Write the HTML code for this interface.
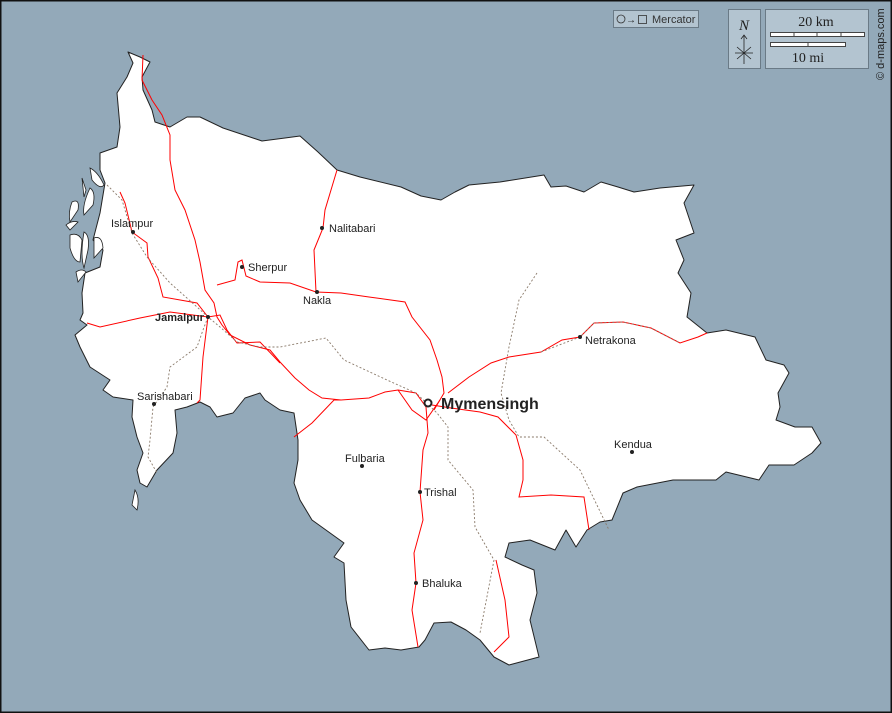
<!DOCTYPE html>
<html><head><style>
html,body{margin:0;padding:0;width:892px;height:713px;overflow:hidden;background:#93a9b9}
svg{display:block}
.s{font-family:"Liberation Sans",sans-serif;fill:#222}
.f{font-family:"Liberation Serif",serif;fill:#222}
</style></head><body>
<svg width="892" height="713" viewBox="0 0 892 713" xmlns="http://www.w3.org/2000/svg">
<rect x="0" y="0" width="892" height="713" fill="#93a9b9"/>
<path fill="#fff" stroke="#222" stroke-width="1" stroke-linejoin="round" d="M128,52 L140,57 150,62 142,77 143,90 152,110 155,122 170,127 187,117 200,117 223,128 253,138 262,141 285,138 300,136 318,152 337,170 360,177 401,187 421,196 441,200 455,192 469,185 500,182 544,175 551,187 566,186 584,192 601,182 618,187 634,192 660,188 694,185 684,203 694,233 676,240 684,260 678,273 691,293 687,317 707,333 726,330 755,337 766,360 784,365 789,373 778,393 780,407 776,420 795,427 812,427 821,443 812,453 794,465 769,465 759,480 726,472 716,480 673,480 637,487 623,493 612,520 600,522 587,530 576,547 566,530 555,550 530,540 509,543 505,557 522,565 534,570 537,593 530,620 539,657 509,665 494,657 480,640 466,630 451,622 434,623 425,640 419,647 401,650 385,648 369,650 351,627 346,600 344,563 334,557 344,543 312,520 300,500 294,483 298,460 298,440 294,413 280,410 265,400 260,393 245,398 233,413 217,417 210,407 200,402 187,407 175,410 177,433 173,453 157,470 147,487 140,483 137,470 143,453 137,437 132,417 133,400 113,397 103,390 110,380 90,367 80,347 75,335 87,325 80,320 83,313 82,293 85,273 100,267 103,250 93,240 100,213 105,183 100,170 100,153 117,147 120,127 117,93 127,77 133,63 Z"/>
<g fill="#fff" stroke="#222" stroke-width="0.8">
<path d="M90,168 Q98,172 104,185 Q100,190 92,180 Z"/>
<path d="M82,178 L86,190 84,197 Z"/>
<path d="M90,188 Q96,192 93,205 L84,215 Q82,205 90,188 Z"/>
<path d="M72,202 Q80,198 78,210 L70,222 Q68,212 72,202 Z"/>
<path d="M66,225 Q72,220 78,222 L70,230 Z"/>
<path d="M70,235 Q78,232 82,240 L80,262 Q74,262 70,248 Z"/>
<path d="M84,232 Q90,235 88,250 L84,268 Q80,255 84,232 Z"/>
<path d="M94,238 Q102,235 103,248 L94,258 Z"/>
<path d="M76,272 Q82,268 86,272 L78,282 Z"/>
<path d="M135,490 Q140,498 137,510 L132,505 Z"/>
</g>
<g fill="none" stroke="#f00" stroke-width="1">
<polyline points="143,55 142,80 152,100 162,115 170,135 170,160 175,190 185,210 195,240 200,262 205,290 214,303 217,317 222,325 230,335 250,345 270,350 280,362 295,378 309,390 322,398 341,400 369,398 385,392 398,390 416,393 426,407"/>
<polyline points="87,323 100,327 140,318 170,312 208,317 220,315 227,330 237,343 260,342 280,363"/>
<polyline points="120,192 125,203 132,232 147,243 148,257 158,278 163,297 197,303 208,317"/>
<polyline points="208,317 203,357 200,400 197,403"/>
<polyline points="217,285 235,280 238,262 242,260 246,276 260,282 290,283 316,292 341,293 369,297 405,302 412,317 430,340 437,360 442,377 444,393 434,410"/>
<polyline points="337,170 325,210 323,228 314,250 316,292"/>
<polyline points="448,393 469,377 491,363 509,357 541,352 562,340 580,337 594,323 623,322 651,328 680,343 698,337 707,333"/>
<polyline points="426,407 428,433 423,450 420,492 423,520 414,553 416,583 412,610 418,647"/>
<polyline points="432,405 451,408 480,412 498,417 516,435 523,460 523,480 519,497 551,495 584,497 589,530"/>
<polyline points="496,560 505,600 509,637 494,652"/>
<polyline points="398,390 412,410 426,420 440,400"/>
<polyline points="294,437 312,423 334,400 341,400"/>
</g>
<g fill="none" stroke="#8a7a6a" stroke-width="0.9" stroke-dasharray="2,2">
<polyline points="107,185 122,200 132,233 147,257 170,283 197,307 208,317 220,327 237,342 260,347 280,347 326,338 344,360 387,380 416,393 437,413 448,427 448,460 473,490 475,527 494,560 480,633"/>
<polyline points="208,317 203,330 197,347 170,367 167,387 153,407 150,440 148,457 157,473"/>
<polyline points="537,273 519,300 509,347 501,393 509,420 519,437 544,437 580,470 609,530"/>
<polyline points="541,352 580,337 594,323 623,322 651,328 680,343"/>
</g>
<g fill="#222">
<circle cx="133" cy="232" r="2"/><circle cx="242" cy="267" r="2"/><circle cx="322" cy="228" r="2"/>
<circle cx="317" cy="292" r="2"/><circle cx="208" cy="317" r="2"/><circle cx="154" cy="404" r="2"/>
<circle cx="580" cy="337" r="2"/><circle cx="362" cy="466" r="2"/><circle cx="632" cy="452" r="2"/>
<circle cx="420" cy="492" r="2"/><circle cx="416" cy="583" r="2"/>
</g>
<circle cx="428" cy="403" r="3.5" fill="#fff" stroke="#222" stroke-width="2"/>
<g class="s" font-size="11">
<text x="111" y="227">Islampur</text>
<text x="248" y="271">Sherpur</text>
<text x="329" y="232">Nalitabari</text>
<text x="303" y="304">Nakla</text>
<text x="155" y="321" font-weight="bold">Jamalpur</text>
<text x="137" y="400">Sarishabari</text>
<text x="585" y="344">Netrakona</text>
<text x="345" y="462">Fulbaria</text>
<text x="614" y="448">Kendua</text>
<text x="424" y="496">Trishal</text>
<text x="422" y="587">Bhaluka</text>
</g>
<text class="s" x="441" y="409" font-size="16" font-weight="bold">Mymensingh</text>
<g fill="#b3c4d0" stroke="#6a7a86" stroke-width="1">
<rect x="613.5" y="10.5" width="85" height="17"/>
<rect x="728.5" y="9.5" width="32" height="59"/>
<rect x="765.5" y="9.5" width="103" height="59"/>
</g>
<circle cx="621" cy="19" r="4" fill="none" stroke="#333" stroke-width="0.8"/>
<text class="s" x="626" y="23" font-size="10">→</text>
<rect x="638.5" y="15.5" width="8" height="8" fill="none" stroke="#333" stroke-width="0.8"/>
<text class="s" x="652" y="23" font-size="11" style="fill:#333">Mercator</text>
<text class="f" x="744" y="30" font-size="15" font-style="italic" text-anchor="middle">N</text>
<g stroke="#222" stroke-width="0.8" fill="none">
<line x1="744" y1="35" x2="744" y2="64"/><polyline points="741,39 744,35 747,39"/>
<line x1="735" y1="53" x2="753" y2="53"/><line x1="737" y1="47" x2="751" y2="59"/><line x1="737" y1="59" x2="751" y2="47"/>
</g>
<text class="f" x="816" y="26" font-size="14" text-anchor="middle">20 km</text>
<text class="f" x="808" y="62" font-size="14" text-anchor="middle">10 mi</text>
<g stroke="#444" stroke-width="1" fill="#fff">
<rect x="770.5" y="32.5" width="94" height="4"/>
<rect x="770.5" y="42.5" width="75" height="4"/>
</g>
<g stroke="#444" stroke-width="1"><line x1="794" y1="32" x2="794" y2="37"/><line x1="817" y1="32" x2="817" y2="37"/><line x1="841" y1="32" x2="841" y2="37"/><line x1="808" y1="42" x2="808" y2="47"/></g>
<text class="s" transform="translate(884,80) rotate(-90)" font-size="11">© d-maps.com</text>
<rect x="0.5" y="0.5" width="891" height="712" fill="none" stroke="#111" stroke-width="2"/>
</svg>
</body></html>
